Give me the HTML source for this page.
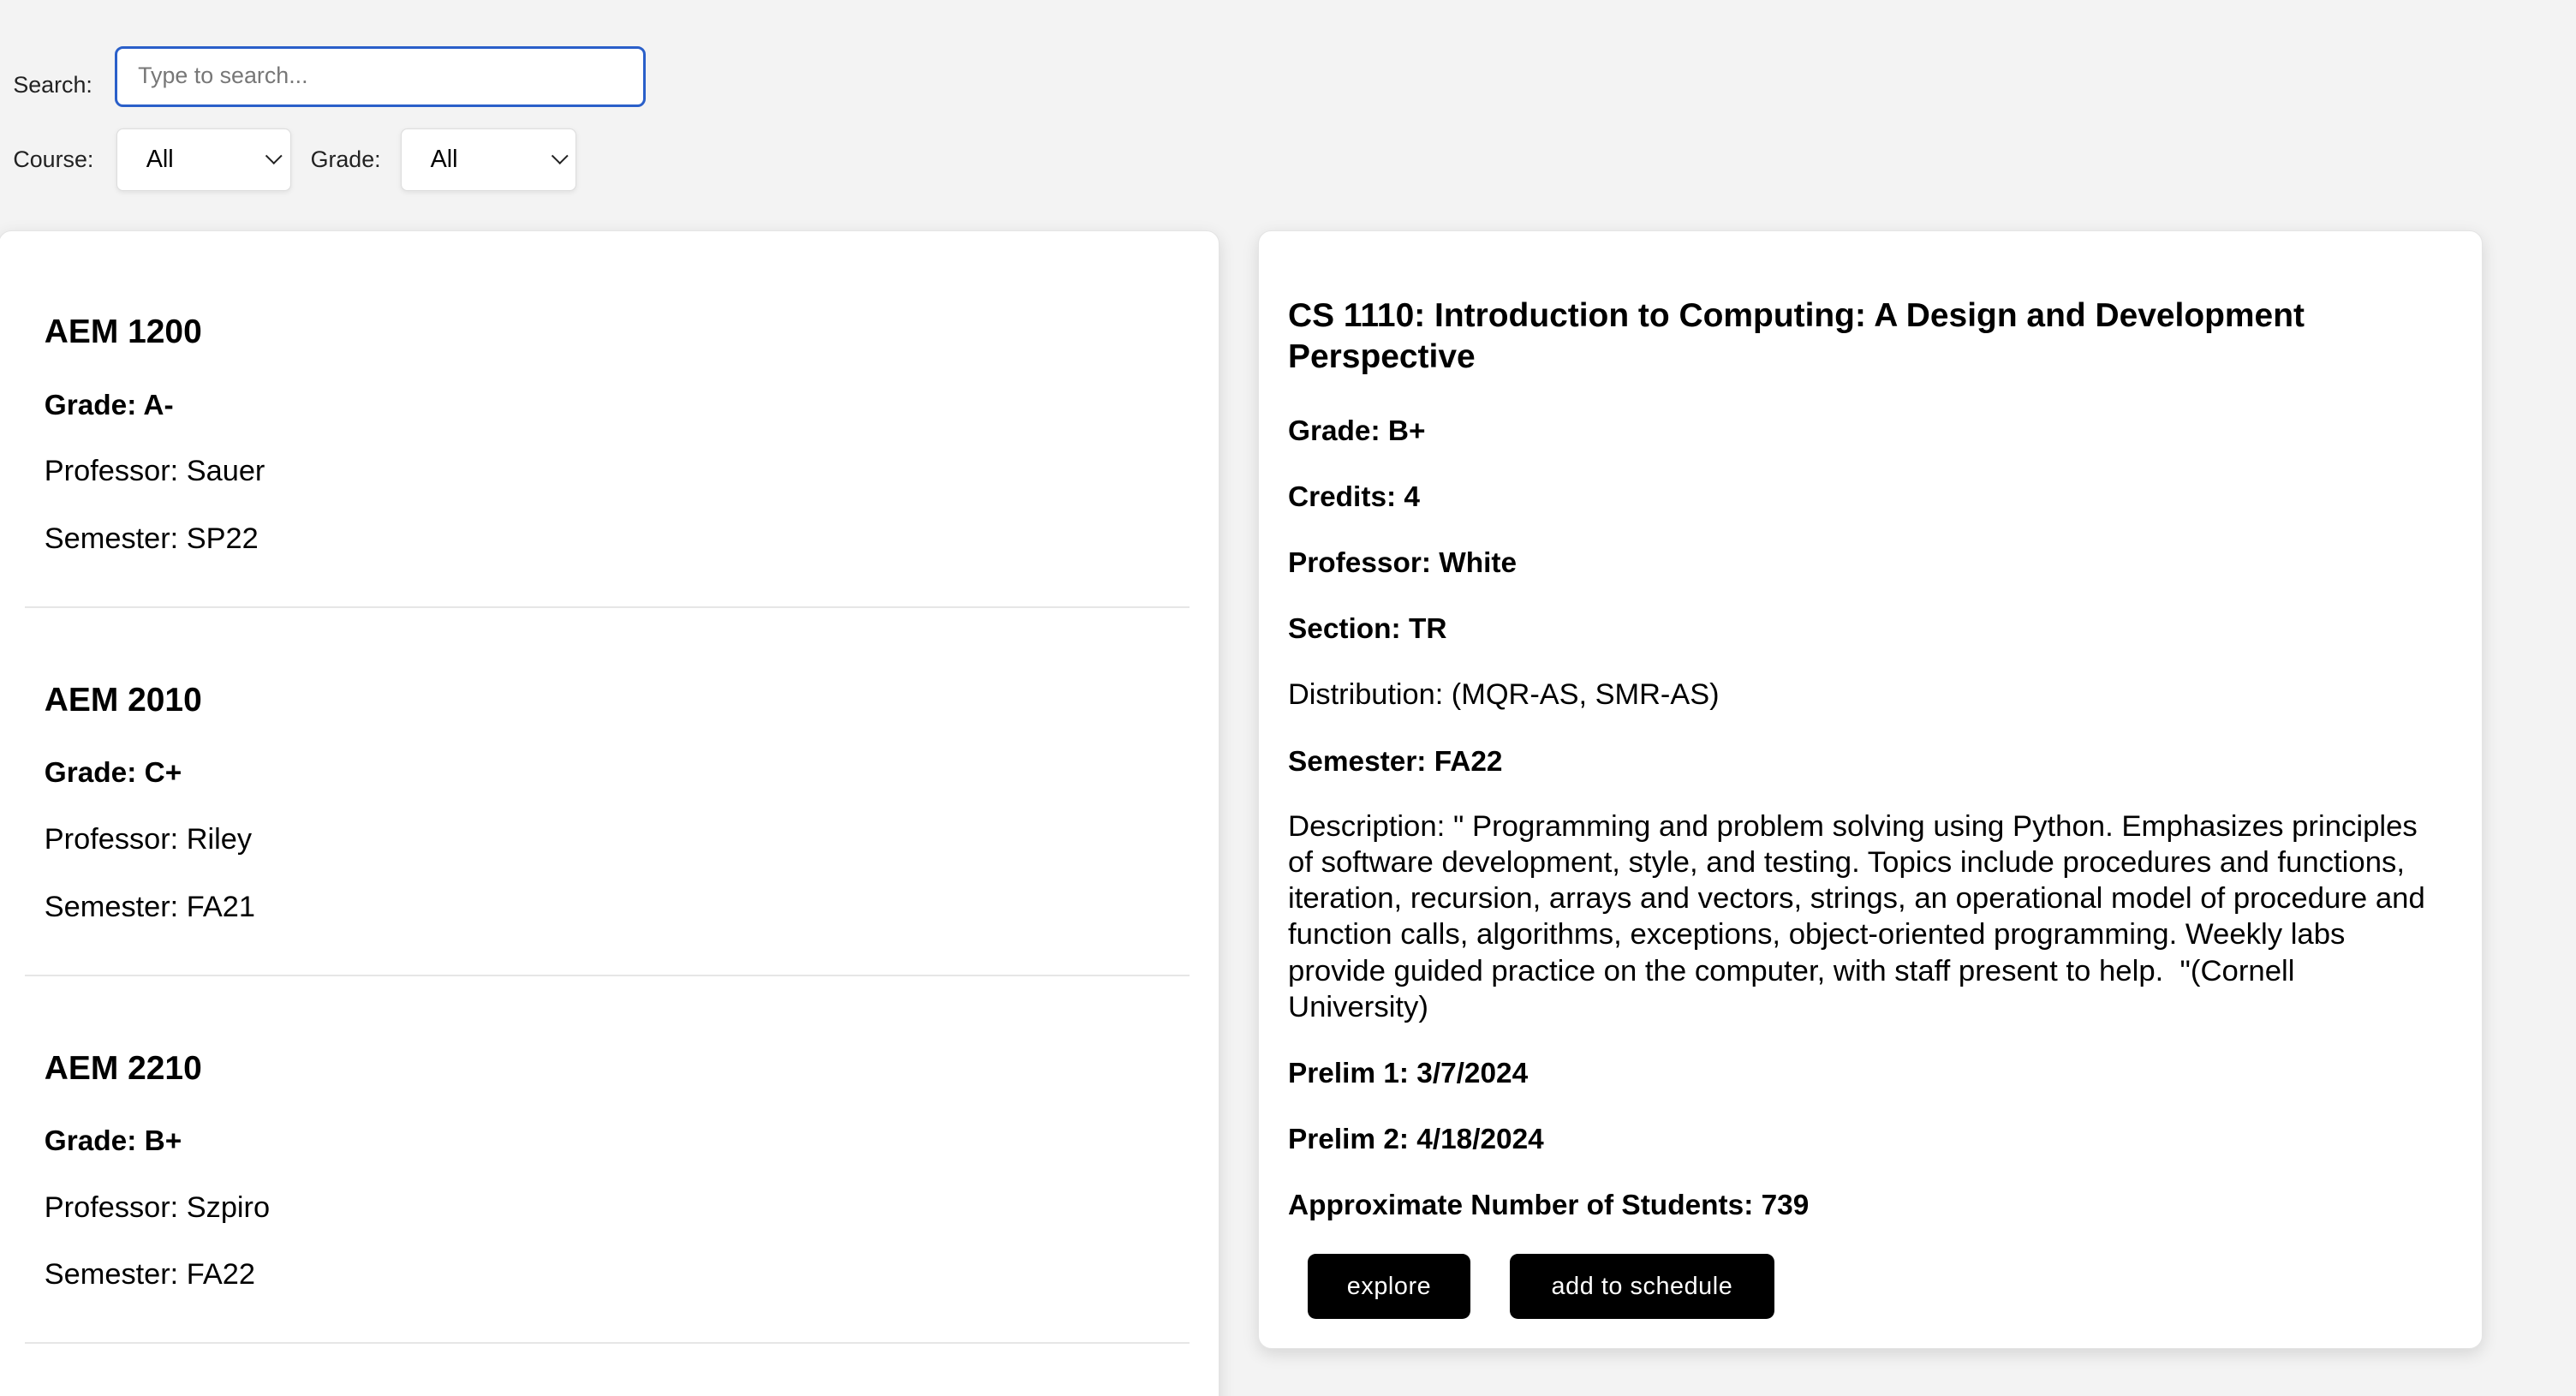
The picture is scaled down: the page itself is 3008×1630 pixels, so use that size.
<!DOCTYPE html>
<html><head><meta charset="utf-8"><style>
html,body{margin:0;padding:0;background:#f3f3f3;width:3008px;height:1630px;overflow:hidden}
#w{zoom:1.9184;position:relative;width:1568px;height:850px;font-family:"Liberation Sans",Arial,sans-serif;color:#000}
.a{position:absolute;white-space:nowrap}
.lbl{font-size:14px;color:#222;line-height:16px}
.inp{position:absolute;background:#fff;box-sizing:border-box}
.card{position:absolute;background:#fff;border-radius:8px;box-shadow:0 3px 10px rgba(0,0,0,.12);border:1px solid #e4e4e4}
.h{font-size:20.3px;font-weight:bold;line-height:25px}
.b{font-size:17.4px;font-weight:bold;line-height:20px}
.n{font-size:17.9px;line-height:20px}
.d{font-size:18.1px;line-height:22px}
.hr{position:absolute;height:1px;background:#e6e6e6;left:15px;width:709px}
.btn{position:absolute;background:#000;color:#fff;border-radius:5px;font-size:15px;text-align:center;line-height:40px;height:40px;letter-spacing:.3px}
.chev{position:absolute;width:6px;height:6px;border-right:1.3px solid #222;border-bottom:1.3px solid #222;transform:rotate(45deg)}
</style></head><body><div id="w">
<div class="a lbl" style="left:8px;top:44px">Search:</div>
<div class="inp" style="left:70px;top:28px;width:323px;height:37px;border:2px solid #2a5fc9;border-radius:5px"></div>
<div class="a" style="left:84px;top:38px;font-size:14px;color:#777;line-height:16px">Type to search...</div>
<div class="a lbl" style="left:8px;top:89px">Course:</div>
<div class="inp" style="left:71px;top:78px;width:106px;height:38px;border:1px solid #ddd;border-radius:4px;box-shadow:0 1px 3px rgba(0,0,0,.08)"></div>
<div class="a" style="left:89px;top:88px;font-size:15px;line-height:18px">All</div>
<div class="chev" style="left:163px;top:91px"></div>
<div class="a lbl" style="left:189px;top:89px">Grade:</div>
<div class="inp" style="left:244px;top:78px;width:107px;height:38px;border:1px solid #ddd;border-radius:4px;box-shadow:0 1px 3px rgba(0,0,0,.08)"></div>
<div class="a" style="left:262px;top:88px;font-size:15px;line-height:18px">All</div>
<div class="chev" style="left:337px;top:91px"></div>

<div class="card" style="left:-1px;top:140px;width:742px;height:740px"></div>
<div class="a h" style="left:27px;top:190px">AEM 1200</div>
<div class="a b" style="left:27px;top:237px">Grade: A-</div>
<div class="a n" style="left:27px;top:277px">Professor: Sauer</div>
<div class="a n" style="left:27px;top:318px">Semester: SP22</div>
<div class="hr" style="top:369px"></div>
<div class="a h" style="left:27px;top:414px">AEM 2010</div>
<div class="a b" style="left:27px;top:461px">Grade: C+</div>
<div class="a n" style="left:27px;top:501px">Professor: Riley</div>
<div class="a n" style="left:27px;top:542px">Semester: FA21</div>
<div class="hr" style="top:593px"></div>
<div class="a h" style="left:27px;top:638px">AEM 2210</div>
<div class="a b" style="left:27px;top:685px">Grade: B+</div>
<div class="a n" style="left:27px;top:725px">Professor: Szpiro</div>
<div class="a n" style="left:27px;top:766px">Semester: FA22</div>
<div class="hr" style="top:817px"></div>

<div class="card" style="left:766px;top:140px;width:744px;height:680px"></div>
<div class="a h" style="left:784px;top:180px">CS 1110: Introduction to Computing: A Design and Development<br>Perspective</div>
<div class="a b" style="left:784px;top:253px">Grade: B+</div>
<div class="a b" style="left:784px;top:293px">Credits: 4</div>
<div class="a b" style="left:784px;top:333px">Professor: White</div>
<div class="a b" style="left:784px;top:373px">Section: TR</div>
<div class="a n" style="left:784px;top:413px">Distribution: (MQR-AS, SMR-AS)</div>
<div class="a b" style="left:784px;top:454px">Semester: FA22</div>
<div class="a d" style="left:784px;top:492px">Description: " Programming and problem solving using Python. Emphasizes principles<br>of software development, style, and testing. Topics include procedures and functions,<br>iteration, recursion, arrays and vectors, strings, an operational model of procedure and<br>function calls, algorithms, exceptions, object-oriented programming. Weekly labs<br>provide guided practice on the computer, with staff present to help. &nbsp;"(Cornell<br>University)</div>
<div class="a b" style="left:784px;top:644px">Prelim 1: 3/7/2024</div>
<div class="a b" style="left:784px;top:684px">Prelim 2: 4/18/2024</div>
<div class="a b" style="left:784px;top:724px">Approximate Number of Students: 739</div>
<div class="btn" style="left:796px;top:763px;width:99px">explore</div>
<div class="btn" style="left:919px;top:763px;width:161px">add to schedule</div>
</div></body></html>
